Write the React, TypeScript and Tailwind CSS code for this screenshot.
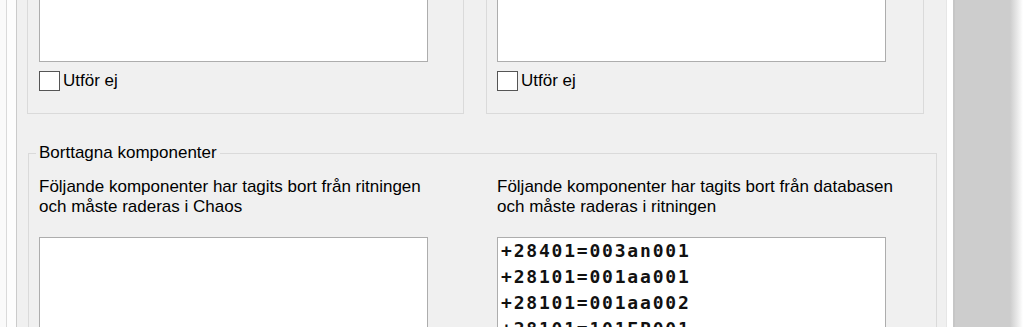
function Checkbox() {
  return (
    <div className="mt-[9px] flex h-[20px] items-center">
      <div className="h-[20px] w-[21px] border border-[#555555] bg-white" />
      <span className="ml-[3px]">Utför ej</span>
    </div>
  );
}

function UpperBox({ w, pl }: { w: string; pl: string }) {
  return (
    <div className={`${w} ${pl} h-[114px] shrink-0 border-x border-b border-[#dadada]`}>
      <div className="h-[62px] w-[389px] border-x border-b border-[#adadad] bg-white" />
      <Checkbox />
    </div>
  );
}

const deleted = ["+28401=003an001", "+28101=001aa001", "+28101=001aa002", "+28101=101EP001", "+28101=101EP002"];

export default function App() {
  return (
    <div className="flex h-[327px] w-[1023px] overflow-hidden bg-white font-['Liberation_Sans',Arial,sans-serif] text-[17px] leading-[20px] text-black">
      <div className="w-[6px] shrink-0 bg-[#fafafa]" />
      <div className="w-px shrink-0 bg-[#dadada]" />
      <div className="w-[9px] shrink-0 bg-[#fdfdfd]" />
      <div className="w-px shrink-0 bg-[#cbcbcb]" />
      <div className="w-[929px] shrink-0 bg-[#f0f0f0]">
        <div className="ml-[10px] flex gap-[22px]">
          <UpperBox w="w-[437px]" pl="pl-[11px]" />
          <UpperBox w="w-[438px]" pl="pl-[10px]" />
        </div>
        <fieldset className="ml-[11px] mt-[29px] h-[260px] w-[909px] border border-[#dadada] pl-[10px]">
          <legend className="-ml-[3px] px-[3px]">Borttagna komponenter</legend>
          <div className="mt-[14px] grid grid-cols-[389px_389px] gap-x-[69px]">
            <div>
              <p className="whitespace-nowrap">
                Följande komponenter har tagits bort från ritningen
                <br />
                och måste raderas i Chaos
              </p>
              <div className="mt-[20px] h-[140px] border border-[#adadad] bg-white" />
            </div>
            <div>
              <p className="whitespace-nowrap">
                Följande komponenter har tagits bort från databasen
                <br />
                och måste raderas i ritningen
              </p>
              <div className="mt-[20px] h-[140px] border border-[#adadad] bg-white pl-[3px] font-['DejaVu_Sans_Mono',monospace] text-[18px] font-bold leading-[26px] tracking-[1.8px] text-[#111111]">
                {deleted.map((d) => (
                  <div key={d}>{d}</div>
                ))}
              </div>
            </div>
          </div>
        </fieldset>
      </div>
      <div className="w-px shrink-0 bg-[#e6e6e6]" />
      <div className="w-[6px] shrink-0 bg-white" />
      <div className="w-[2px] shrink-0 bg-[#c6c6c6]" />
      <div className="w-[55px] shrink-0 bg-[#cdcdcd]" />
      <div className="w-[13px] shrink-0 bg-linear-to-r from-[#cdcdcd] to-white" />
    </div>
  );
}
